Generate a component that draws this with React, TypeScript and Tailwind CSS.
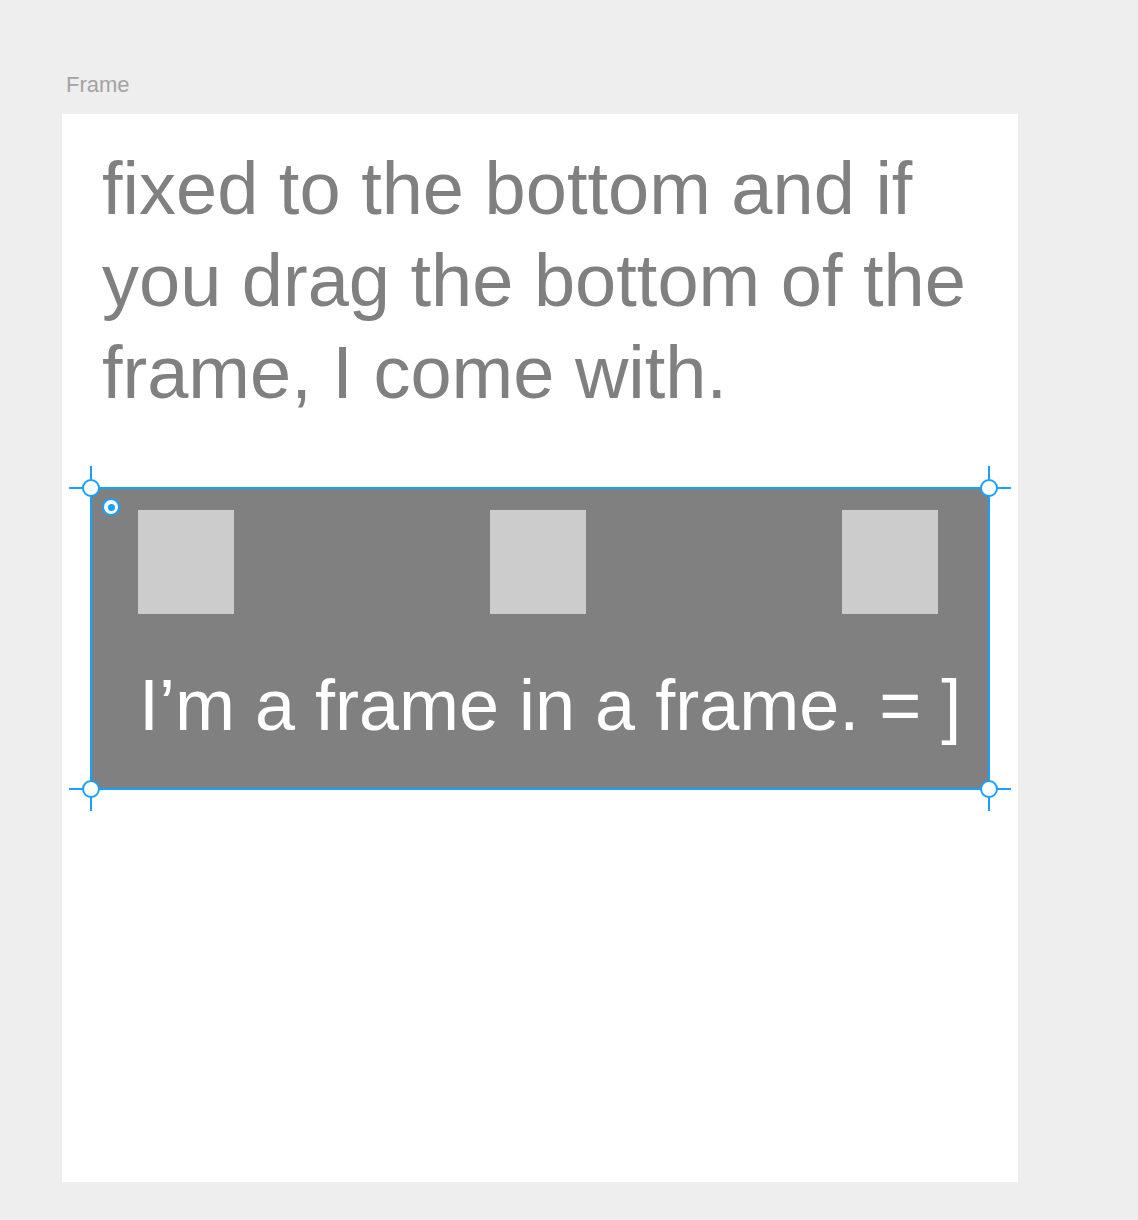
import React from "react";

const BLUE = "#18a0fb";

function CornerHandle({ className }: { className: string }) {
  return (
    <svg
      className={`absolute ${className}`}
      width="44"
      height="44"
      viewBox="0 0 44 44"
    >
      <line x1="0" y1="22" x2="44" y2="22" stroke={BLUE} strokeWidth="2" />
      <line x1="22" y1="0" x2="22" y2="44" stroke={BLUE} strokeWidth="2" />
      <circle cx="22" cy="22" r="8" fill="#ffffff" stroke={BLUE} strokeWidth="2" />
    </svg>
  );
}

export default function App() {
  return (
    <div
      className="min-h-[1220px] w-full bg-[#eeeeee] pt-[72px]"
      style={{ fontFamily: '"Liberation Sans", Arial, Helvetica, sans-serif' }}
    >
      {/* Frame label */}
      <div className="ml-[66px] h-[26px] text-[22px] leading-[26px] text-[#a3a3a3]">
        Frame
      </div>

      {/* Frame */}
      <div className="ml-[62px] mt-[16px] h-[1068px] w-[956px] bg-white pt-[29px]">
        <p className="pl-[40px] pr-[40px] text-[74px] leading-[92px] text-[#808080]">
          fixed to the bottom and if
          <br />
          you drag the bottom of the
          <br />
          frame, I come with.
        </p>

        {/* Nested frame (selected) */}
        <div className="relative ml-[28px] mt-[68px] h-[303px] w-[900px] border-2 border-[#18a0fb] bg-[#808080]">
          <div className="flex justify-between pl-[46px] pr-[50px] pt-[21px]">
            <div className="h-[104px] w-[96px] bg-[#cccccc]" />
            <div className="h-[104px] w-[96px] bg-[#cccccc]" />
            <div className="h-[104px] w-[96px] bg-[#cccccc]" />
          </div>
          <div className="mt-[55px] pl-[47px] text-[72px] leading-[72px] whitespace-nowrap text-white">
            I’m a frame in a frame. = ]
          </div>

          {/* selection handles */}
          <CornerHandle className="-left-[23px] -top-[23px]" />
          <CornerHandle className="-right-[23px] -top-[23px]" />
          <CornerHandle className="-left-[23px] -bottom-[23px]" />
          <CornerHandle className="-right-[23px] -bottom-[23px]" />

          {/* origin dot */}
          <div className="absolute left-[10px] top-[9px] flex h-[18px] w-[18px] items-center justify-center rounded-full border-2 border-[#18a0fb] bg-white">
            <div className="h-[7px] w-[7px] rounded-full bg-[#18a0fb]" />
          </div>
        </div>
      </div>
    </div>
  );
}
